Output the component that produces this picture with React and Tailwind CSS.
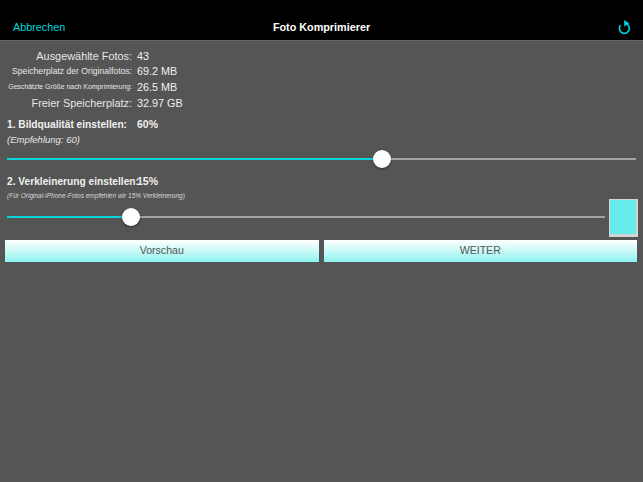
import React from "react";

const infoRows = [
  { label: "Ausgewählte Fotos:", size: "text-[10.9px]", value: "43" },
  { label: "Speicherplatz der Originalfotos:", size: "text-[8.6px]", value: "69.2 MB" },
  { label: "Geschätzte Größe nach Komprimierung:", size: "text-[6.9px]", value: "26.5 MB" },
  { label: "Freier Speicherplatz:", size: "text-[10.9px]", value: "32.97 GB" },
];

const Slider = ({ percent }) => (
  <div className="relative h-[22px] flex items-center grow">
    <div className="h-[2px] bg-[#00d5dc]" style={{ width: `${percent}%` }} />
    <div className="h-[2px] grow bg-[#a3a3a3]" />
    <div
      className="absolute top-[2px] w-[18px] h-[18px] -ml-[9px] rounded-full bg-white shadow-[0_1px_3px_rgba(0,0,0,0.45)]"
      style={{ left: `${percent}%` }}
    />
  </div>
);

const PreviewButton = ({ children }) => (
  <button className="flex-1 h-[22px] bg-gradient-to-b from-white to-[#8af2f0] text-[#555] text-[10.6px]">
    {children}
  </button>
);

export default function App() {
  return (
    <div className="w-[643px] h-[482px] bg-[#555555] text-[#f0f0f0] font-['Liberation_Sans',sans-serif] overflow-hidden">
      <header className="h-[41px] bg-black border-b border-[#666] pt-[18px] pl-[13px] pr-[12px] flex items-start justify-between relative">
        <span className="text-[#00d5dc] text-[10.8px] leading-[18px]">Abbrechen</span>
        <span className="absolute inset-x-0 top-[18px] text-center text-white text-[10.8px] font-bold leading-[18px]">Foto Komprimierer</span>
        <svg className="mt-[1px]" width="13" height="16" viewBox="0 0 13 16" fill="none">
          <path d="M7 4.4A5 5 0 1 1 2.4 6.3" stroke="#00d5dc" strokeWidth="1.6" />
          <path d="M6.2 1L11.2 4.2L6.2 7.4Z" fill="#00d5dc" />
        </svg>
      </header>

      <div className="pt-[7px]">
        {infoRows.map((row) => (
          <div key={row.label} className="flex items-center h-[15.7px] whitespace-nowrap">
            <span className={`w-[132px] text-right text-[#e6e6e6] ${row.size}`}>{row.label}</span>
            <span className="ml-[5px] text-[10.8px]">{row.value}</span>
          </div>
        ))}
      </div>

      <div className="flex items-center mt-[6px] pl-[7px] h-4 text-[10.2px] font-bold whitespace-nowrap">
        <span className="w-[130px]">1. Bildqualität einstellen:</span>
        <span className="text-[10.5px]">60%</span>
      </div>
      <div className="pl-[7px] h-[14px] text-[9.5px] italic leading-[14px] text-[#e6e6e6]">(Empfehlung: 60)</div>

      <div className="pl-[7px] pr-[7px] mt-[1px] flex">
        <Slider percent={59.6} />
      </div>

      <div className="flex items-center mt-[4px] pl-[7px] h-4 text-[10.2px] font-bold whitespace-nowrap">
        <span className="w-[130px]">2. Verkleinerung einstellen:</span>
        <span className="text-[10.5px]">15%</span>
      </div>
      <div className="pl-[7px] h-[12px] text-[6.5px] italic leading-[12px] text-[#d8d8d8] whitespace-nowrap">(Für Original-iPhone-Fotos empfehlen wir 15% Verkleinerung)</div>

      <div className="flex items-start pl-[7px] pr-[5px] -mt-[3px]">
        <div className="grow flex pt-[7px]">
          <Slider percent={20.7} />
        </div>
        <div className="ml-[4px] w-[29px] h-[38px] bg-[#66ebeb] border-r-[2px] border-b-[3px] border-t border-l border-[#d4d4d4]" />
      </div>

      <div className="flex gap-[5px] pl-[5px] pr-[6px] mt-[3px]">
        <PreviewButton>Vorschau</PreviewButton>
        <PreviewButton>WEITER</PreviewButton>
      </div>
    </div>
  );
}
